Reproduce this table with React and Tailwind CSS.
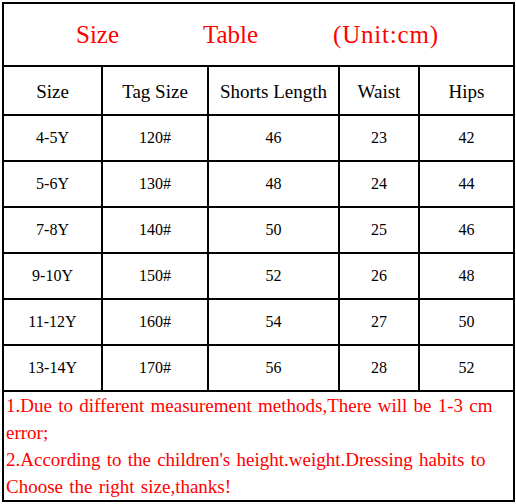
import React from 'react';

const rows = [
  ['4-5Y', '120#', '46', '23', '42'],
  ['5-6Y', '130#', '48', '24', '44'],
  ['7-8Y', '140#', '50', '25', '46'],
  ['9-10Y', '150#', '52', '26', '48'],
  ['11-12Y', '160#', '54', '27', '50'],
  ['13-14Y', '170#', '56', '28', '52'],
];

const headers = ['Size', 'Tag Size', 'Shorts Length', 'Waist', 'Hips'];

const Row = ({ cells, className, height }) => (
  <div className={`grid grid-cols-[99px_106px_131px_80px_93px] border-b-2 border-black ${height}`}>
    {cells.map((c, i) => (
      <div
        key={i}
        className={`flex items-center justify-center text-black ${className} ${i < cells.length - 1 ? 'border-r-2 border-black' : ''}`}
      >
        {c}
      </div>
    ))}
  </div>
);

export default function App() {
  return (
    <div className="w-[516px] h-[504px] bg-white pt-[2px] pl-[2px] font-[family-name:'Liberation_Serif','Times_New_Roman',serif]">
      <div className="w-[513px] border-2 border-black">
        <div className="h-[63px] border-b-2 border-black flex items-center pl-[72px] text-[25px] text-[#ff0000]">
          <span className="w-[127px]">Size</span>
          <span className="w-[130px]">Table</span>
          <span className="tracking-[0.8px]">(Unit:cm)</span>
        </div>
        <Row cells={headers} className="text-[19px] pt-[4px]" height="h-[49px]" />
        {rows.map((r, i) => (
          <Row key={i} cells={r} className="text-[16px]" height="h-[46px]" />
        ))}
        <div className="h-[108px] pl-[2px] text-[19px] leading-[27px] text-[#ff0000] [word-spacing:1.5px]">
          <p>1.Due to different measurement methods,There will be 1-3 cm error;</p>
          <p>2.According to the children's height.weight.Dressing habits to Choose the right size,thanks!</p>
        </div>
      </div>
    </div>
  );
}
